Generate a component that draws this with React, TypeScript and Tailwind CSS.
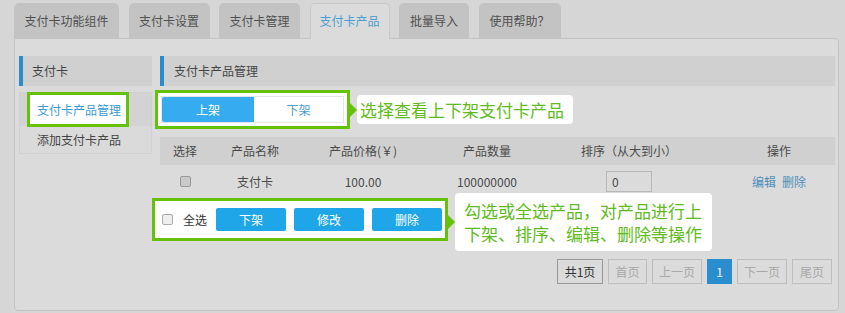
import React from "react";

const tabs = [
  { label: "支付卡功能组件", w: "w-[105px]" },
  { label: "支付卡设置", w: "w-[81px]" },
  { label: "支付卡管理", w: "w-[81px]" },
  { label: "支付卡产品", w: "w-[80px]", active: true },
  { label: "批量导入", w: "w-[70px]" },
  { label: "使用帮助？", w: "w-[82px]" },
];

function Check({ light }: { light?: boolean }) {
  return (
    <span
      className={
        "inline-block w-[11px] h-[11px] rounded-[2px] border " +
        (light ? "border-[#aaaaaa] bg-[#eeeeee]" : "border-[#9a9a9a] bg-[#c9c9c9]")
      }
    />
  );
}

function Arrow() {
  return (
    <span className="w-0 h-0 border-y-[7px] border-y-transparent border-l-[7px] border-l-[#66c10b]" />
  );
}

export default function App() {
  return (
    <div className="w-[845px] h-[313px] bg-[#d6d6d6] pt-[3px] pl-[14px] pr-[6px] font-['Noto_Sans_CJK_SC','Liberation_Sans',sans-serif] text-[12px] text-[#4a4a4a] overflow-hidden">
      {/* tabs */}
      <div className="flex gap-[9.5px] h-[36px] relative z-10">
        {tabs.map((t) => (
          <div
            key={t.label}
            className={
              "h-[36px] rounded-t-[5px] flex items-center justify-center text-[12px] pb-[1px] " +
              t.w +
              (t.active
                ? " bg-[#dbdbdb] border border-b-0 border-[#c8c8c8] text-[#4b9ed0]"
                : " bg-[#c3c3c3] text-[#505050] h-[35px]")
            }
          >
            {t.label}
          </div>
        ))}
      </div>

      {/* panel */}
      <div className="mt-[-1px] h-[273px] bg-[#dbdbdb] border border-[#c4c4c4] rounded-b-[4px] rounded-tr-[4px] pl-[4px] pr-[3px] pt-[17px] flex gap-[8px]">
        {/* sidebar */}
        <div className="w-[133px] flex flex-col">
          <div className="h-[30px] bg-[#d0d0d0] border-l-[4px] border-[#2b8bcb] flex items-center pl-[9px] text-[#444]">
            支付卡
          </div>
          <div className="mt-[6px] border border-[#d0d0d0] bg-[#dadada]">
            <div className="h-[33px] bg-[#d3d3d3] relative">
              <div className="absolute left-[7px] top-[-1px] w-[102px] h-[35px] border-[3px] border-[#66c10b] bg-white flex items-center pl-[7px] text-[#3b9bd6]">
                支付卡产品管理
              </div>
            </div>
            <div className="h-[27px] flex items-center pl-[17px] text-[#444]">添加支付卡产品</div>
          </div>
        </div>

        {/* content */}
        <div className="flex-1 flex flex-col">
          <div className="h-[30px] bg-[#d0d0d0] border-l-[4px] border-[#2b8bcb] flex items-center pl-[10px] text-[#444]">
            支付卡产品管理
          </div>

          {/* toggle row */}
          <div className="mt-[4px] ml-[-5px] flex items-center">
            <div className="w-[195px] h-[39px] border-[3px] border-[#66c10b] bg-white p-[3px]">
              <div className="h-full flex border border-[#e6e6e6]">
                <div className="w-[92px] bg-[#37abef] text-white flex items-center justify-center rounded-l-[2px]">
                  上架
                </div>
                <div className="flex-1 flex items-center justify-center text-[#4a9fd0]">下架</div>
              </div>
            </div>
            <Arrow />
            <div className="h-[29px] w-[216px] bg-white rounded-[4px] flex items-center pl-[3px] text-[17px] leading-none text-[#61bb20]">
              选择查看上下架支付卡产品
            </div>
          </div>

          {/* table header */}
          <div className="mt-[8px] h-[28px] bg-[#d0d0d0] flex items-center text-[#4a4a4a]">
            <div className="w-[50px] text-center">选择</div>
            <div className="w-[90px] text-center">产品名称</div>
            <div className="w-[126px] text-center">产品价格(￥)</div>
            <div className="w-[122px] text-center">产品数量</div>
            <div className="w-[162px] text-center">排序（从大到小）</div>
            <div className="ml-auto w-[112px] text-center">操作</div>
          </div>

          {/* row */}
          <div className="h-[33px] flex items-center text-[#4a4a4a]">
            <div className="w-[50px] flex justify-center">
              <Check />
            </div>
            <div className="w-[90px] text-center">支付卡</div>
            <div className="w-[126px] text-center">100.00</div>
            <div className="w-[122px] text-center">100000000</div>
            <div className="w-[162px] flex justify-center">
              <div className="w-[46px] h-[21px] border border-[#b8b8b8] bg-[#dbdbdb] flex items-center pl-[5px]">0</div>
            </div>
            <div className="ml-auto w-[112px] flex justify-center gap-[6px] text-[#4d8fbc]">
              <span>编辑</span>
              <span>删除</span>
            </div>
          </div>

          {/* batch row */}
          <div className="ml-[-8px] relative w-[296px]">
            <div className="h-[43px] border-[3px] border-[#66c10b] bg-white flex items-center pl-[7px]">
              <Check light />
              <span className="ml-[10px] text-[#333]">全选</span>
              <div className="ml-[9px] flex gap-[8px]">
                {["下架", "修改", "删除"].map((b) => (
                  <div key={b} className="w-[70px] h-[23px] rounded-[2px] bg-[#1ea6e8] text-white flex items-center justify-center">
                    {b}
                  </div>
                ))}
              </div>
            </div>
            <div className="absolute left-[296px] top-[-5px] flex items-center">
              <Arrow />
              <div className="w-[257px] h-[58px] bg-white rounded-[4px] flex flex-col justify-center pl-[9px] text-[17px] leading-[23px] text-[#61bb20]">
                <span>勾选或全选产品，对产品进行上</span>
                <span>下架、排序、编辑、删除等操作</span>
              </div>
            </div>
          </div>

          {/* pagination */}
          <div className="mt-[18px] flex justify-end gap-[5px] pr-[3px]">
            <div className="h-[25px] w-[46px] border border-[#999] flex items-center justify-center text-[#333]">共1页</div>
            <div className="h-[25px] w-[39px] border border-[#bdbdbd] flex items-center justify-center text-[#a8a8a8]">首页</div>
            <div className="h-[25px] w-[50px] border border-[#bdbdbd] flex items-center justify-center text-[#a8a8a8]">上一页</div>
            <div className="h-[25px] w-[25px] bg-[#2a8dcd] flex items-center justify-center text-white">1</div>
            <div className="h-[25px] w-[50px] border border-[#bdbdbd] flex items-center justify-center text-[#a8a8a8]">下一页</div>
            <div className="h-[25px] w-[40px] border border-[#bdbdbd] flex items-center justify-center text-[#a8a8a8]">尾页</div>
          </div>
        </div>
      </div>
    </div>
  );
}
